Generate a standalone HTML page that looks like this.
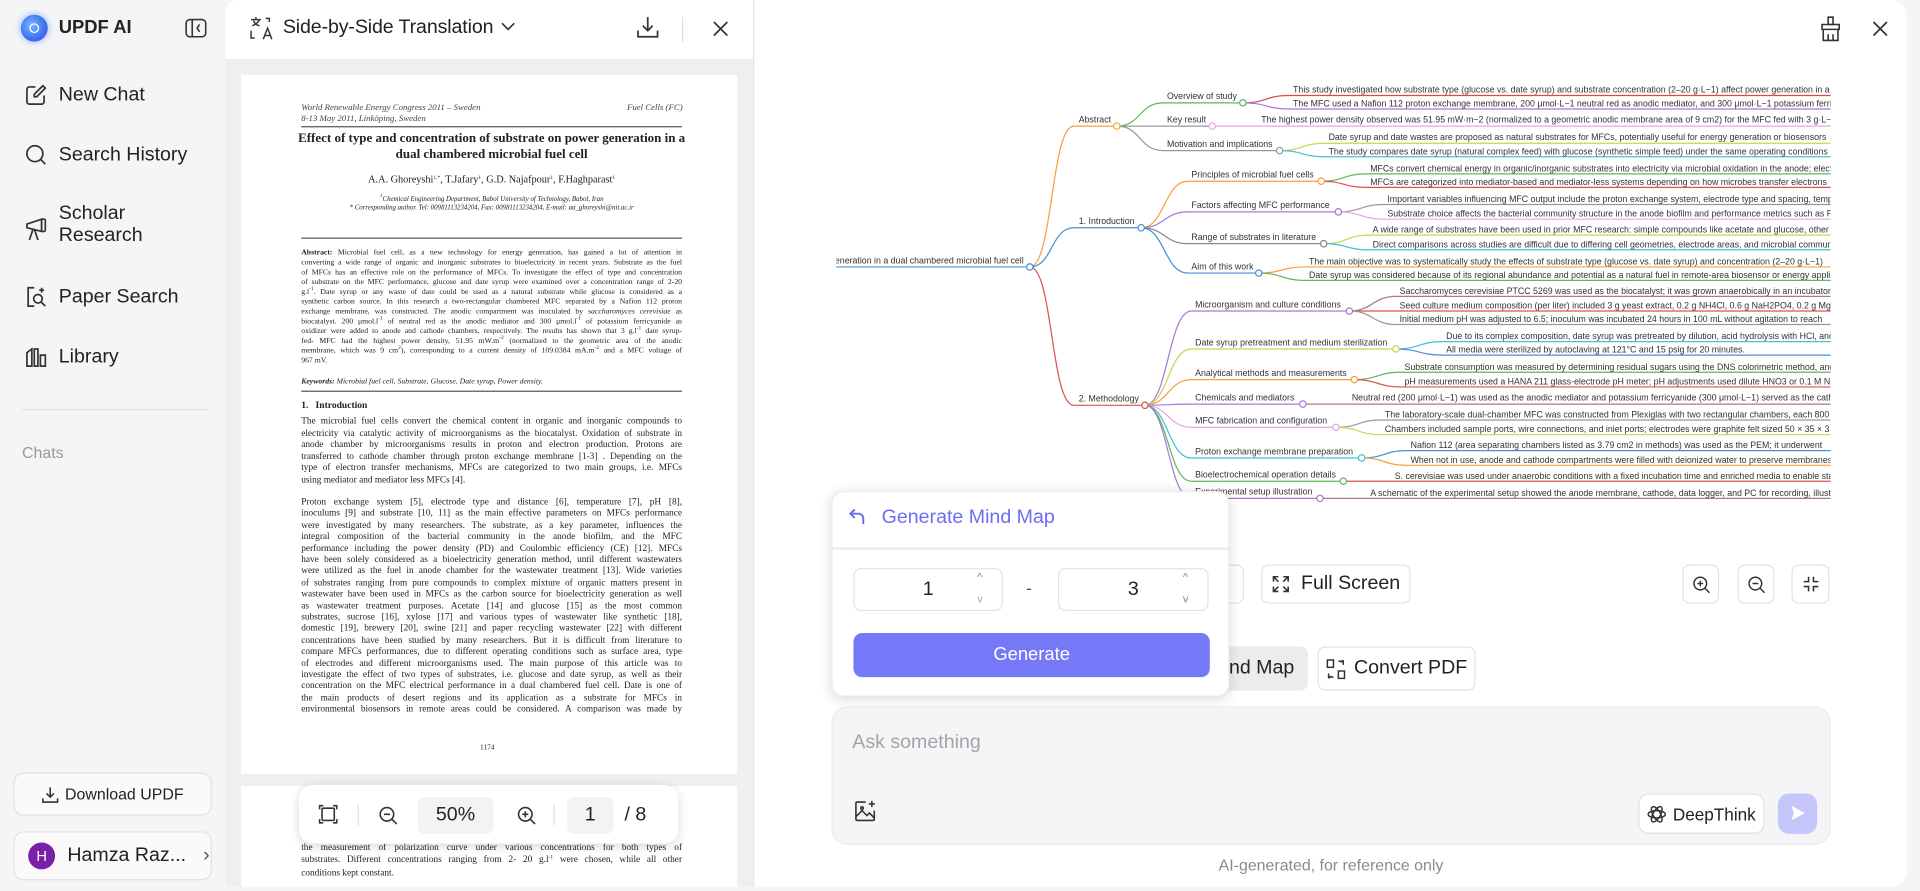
<!DOCTYPE html>
<html><head><meta charset="utf-8">
<style>
*{box-sizing:border-box;margin:0;padding:0}
html,body{width:1920px;height:891px;overflow:hidden;background:#f5f5f7;font-family:"Liberation Sans",sans-serif;color:#222}
.s{position:absolute;left:0;top:0;width:1568px;height:727.6px;transform:scale(1.22449);transform-origin:0 0}
.a{position:absolute}
.mi{position:absolute;left:20px;font-size:16px;color:#222;display:flex;align-items:center}
.mi svg{margin-right:9px}
.pdf{font-family:"Liberation Serif",serif;color:#222}
.pdf sup{font-size:4.5px;line-height:0;vertical-align:3px}
.ln{position:absolute;left:246px;width:311px;white-space:nowrap;text-align:justify;text-align-last:justify;font-size:7.6px;line-height:9px}
.ab{font-size:6.3px;line-height:8px}
.btn{position:absolute;background:#fff;border:1px solid #e2e2e6;border-radius:6px;display:flex;align-items:center;justify-content:center;font-size:16px;color:#222}
</style></head><body><div class="s">

<!-- sidebar -->
<div class="a" style="left:17px;top:12px;width:22px;height:22px;border-radius:50%;background:radial-gradient(circle at 40% 40%,#7ab8ff,#3d6ef0 60%,#6a4cf0);box-shadow:0 0 6px #8ab0ff"></div>
<div class="a" style="left:24px;top:19px;width:8px;height:8px;border:1.5px solid #fff;border-radius:50%"></div>
<div class="a" style="left:48px;top:14px;font-size:15px;font-weight:bold">UPDF AI</div>
<svg class="a" style="left:151px;top:15px" width="18" height="16" viewBox="0 0 18 16"><rect x="1" y="1" width="16" height="14" rx="3" fill="none" stroke="#333" stroke-width="1.3"/><line x1="6" y1="1" x2="6" y2="15" stroke="#333" stroke-width="1.3"/><path d="M12 5 L10 8 L12 11" fill="none" stroke="#333" stroke-width="1.3"/></svg>

<div class="mi" style="top:68px"><svg width="19" height="19" viewBox="0 0 19 19" fill="none" stroke="#333" stroke-width="1.4"><path d="M9 3H4a2 2 0 0 0-2 2v10a2 2 0 0 0 2 2h10a2 2 0 0 0 2-2v-5"/><path d="M15 2l2 2-7 7H8V9z"/></svg>New Chat</div>
<div class="mi" style="top:117px"><svg width="19" height="19" viewBox="0 0 19 19" fill="none" stroke="#333" stroke-width="1.4"><circle cx="8.5" cy="8.5" r="6.5"/><path d="M13 13l4 4"/></svg>Search History</div>
<div class="mi" style="top:166px;align-items:flex-start"><svg width="19" height="22" viewBox="0 0 19 22" fill="none" stroke="#333" stroke-width="1.4" style="margin-top:10px"><path d="M2 7l12-4v10L2 10z"/><rect x="14" y="3" width="3" height="10" rx="1"/><path d="M7 11l-3 9M8 11l3 9"/></svg><span style="line-height:18px">Scholar<br>Research</span></div>
<div class="mi" style="top:233px"><svg width="19" height="19" viewBox="0 0 19 19" fill="none" stroke="#333" stroke-width="1.4"><path d="M8 2H3v15h5"/><circle cx="11" cy="11" r="3.5"/><path d="M13.5 13.5L17 17"/><path d="M14 2v4M12 4h4"/></svg>Paper Search</div>
<div class="mi" style="top:282px"><svg width="19" height="19" viewBox="0 0 19 19" fill="none" stroke="#333" stroke-width="1.4"><path d="M2 17V6l4-3v14zM8 17V3h3v14zM13 17V8h4v9z"/></svg>Library</div>
<div class="a" style="left:18px;top:334px;width:152px;height:1px;background:#e2e2e6"></div>
<div class="a" style="left:18px;top:362px;font-size:13px;color:#999">Chats</div>
<div class="btn" style="left:11px;top:631px;width:162px;height:35px;border-radius:8px;font-size:13px;background:#fafafa"><svg width="14" height="14" viewBox="0 0 14 14" fill="none" stroke="#333" stroke-width="1.3" style="margin-right:5px"><path d="M7 1v8M4 6l3 3 3-3M1 10v3h12v-3"/></svg>Download UPDF</div>
<div class="btn" style="left:11px;top:679px;width:162px;height:40px;border-radius:8px;justify-content:flex-start;padding-left:11px;background:#fafafa"><div style="width:22px;height:22px;border-radius:50%;background:#7a1fa8;color:#fff;font-size:12px;display:flex;align-items:center;justify-content:center;margin-right:10px">H</div>Hamza Raz...<span style="margin-left:14px;color:#555">›</span></div>

<!-- translation panel -->
<div class="a" style="left:184px;top:0;width:431px;height:724px;background:#efefef;border-radius:10px 0 0 0;overflow:hidden">
 <div class="a" style="left:0;top:0;width:431px;height:48px;background:#fff"></div>
</div>
<svg class="a" style="left:204px;top:13px" width="19" height="20" viewBox="0 0 19 20" fill="none" stroke="#333" stroke-width="1.2"><path d="M1 3h8M5 1v2M2 8c3-1 5-3 6-5M3 4c1 2 3 4 5 4"/><path d="M1 12v6h3"/><path d="M11 19l3.5-9 3.5 9M12.3 16h4.4"/><path d="M13 2h3v3"/></svg>
<div class="a" style="left:231px;top:14px;font-size:16px;letter-spacing:-0.1px">Side-by-Side Translation</div>
<svg class="a" style="left:409px;top:18px" width="12" height="8"><path d="M1 1l5 5 5-5" fill="none" stroke="#333" stroke-width="1.3"/></svg>
<svg class="a" style="left:520px;top:13px" width="18" height="18" viewBox="0 0 18 18" fill="none" stroke="#333" stroke-width="1.4"><path d="M9 1v11M5 8l4 4 4-4M1 12v5h16v-5"/></svg>
<div class="a" style="left:557px;top:14px;width:1px;height:20px;background:#ddd"></div>
<svg class="a" style="left:582px;top:17px" width="13" height="13"><path d="M1 1l11 11M12 1L1 12" stroke="#333" stroke-width="1.4"/></svg>

<!-- pdf page -->
<div class="a" style="left:197px;top:61px;width:405px;height:571px;background:#fff"></div>
<div class="a" style="left:197px;top:642px;width:405px;height:82px;background:#fff"></div>
<div class="pdf">
<div class="a" style="left:246px;top:84px;font-size:7.2px;font-style:italic;color:#444">World Renewable Energy Congress 2011 – Sweden</div>
<div class="a" style="left:512px;top:84px;font-size:7.2px;font-style:italic;color:#444">Fuel Cells (FC)</div>
<div class="a" style="left:246px;top:93px;font-size:7.2px;font-style:italic;color:#444">8-13 May 2011, Linköping, Sweden</div>
<div class="a" style="left:246px;top:102.6px;width:311px;height:1px;background:#555"></div>
<div class="a" style="left:240px;top:108px;width:323px;text-align:center;font-size:10.6px;font-weight:bold;line-height:12.6px">Effect of type and concentration of substrate on power generation in a dual chambered microbial fuel cell</div>
<div class="a" style="left:246px;top:142px;width:311px;text-align:center;font-size:8.4px">A.A. Ghoreyshi<sup>1,*</sup>, T.Jafary<sup>1</sup>, G.D. Najafpour<sup>1</sup>, F.Haghparast<sup>1</sup></div>
<div class="a" style="left:246px;top:160px;width:311px;text-align:center;font-size:5.6px;font-style:italic;line-height:7.4px"><sup>1</sup>Chemical Engineering Department, Babol University of Technology, Babol, Iran<br>* Corresponding author. Tel: 00981113234204, Fax: 00981113234204, E-mail: aa_ghoreyshi@nit.ac.ir</div>
<div class="a" style="left:246px;top:193.6px;width:311px;height:1px;background:#555"></div>
<div class="ln ab" style="top:203px"><b>Abstract:</b> Microbial fuel cell, as a new technology for energy generation, has gained a lot of attention in</div>
<div class="ln ab" style="top:211px">converting a wide range of organic and inorganic substrates to bioelectricity in recent years. Substrate as the fuel</div>
<div class="ln ab" style="top:219px">of MFCs has an effective role on the performance of MFCs. To investigate the effect of type and concentration</div>
<div class="ln ab" style="top:227px">of substrate on the MFC performance, glucose and date syrup were examined over a concentration range of 2-20</div>
<div class="ln ab" style="top:235px">g.l<sup>-1</sup>. Date syrup or any waste of date could be used as a natural substrate while glucose is considered as a</div>
<div class="ln ab" style="top:243px">synthetic carbon source. In this research a two-rectangular chambered MFC separated by a Nafion 112 proton</div>
<div class="ln ab" style="top:251px">exchange membrane, was constructed. The anodic compartment was inoculated by <i>saccharomyces cerevisiae</i> as</div>
<div class="ln ab" style="top:259px">biocatalyst. 200 μmol.l<sup>-1</sup> of neutral red as the anodic mediator and 300 μmol.l<sup>-1</sup> of potassium ferricyanide as</div>
<div class="ln ab" style="top:267px">oxidizer were added to anode and cathode chambers, respectively. The results has shown that 3 g.l<sup>-1</sup> date syrup-</div>
<div class="ln ab" style="top:275px">fed- MFC had the highest power density, 51.95 mW.m<sup>-2</sup> (normalized to the geometric area of the anodic</div>
<div class="ln ab" style="top:283px">membrane, which was 9 cm<sup>2</sup>), corresponding to a current density of 109.0384 mA.m<sup>-2</sup> and a MFC voltage of</div>
<div class="a ab" style="left:246px;top:291px;font-size:6.3px">967 mV.</div>
<div class="a" style="left:246px;top:308px;font-size:6.3px;font-style:italic"><b>Keywords:</b> Microbial fuel cell, Substrate, Glucose, Date syrup, Power density.</div>
<div class="a" style="left:246px;top:318.5px;width:311px;height:1px;background:#555"></div>
<div class="a" style="left:246px;top:326px;font-size:7.8px;font-weight:bold">1.&nbsp;&nbsp; Introduction</div>
<div class="ln" style="top:339px">The microbial fuel cells convert the chemical content in organic and inorganic compounds to</div>
<div class="ln" style="top:348.5px">electricity via catalytic activity of microorganisms as the biocatalyst. Oxidation of substrate in</div>
<div class="ln" style="top:358px">anode chamber by microorganisms results in proton and electron production. Protons are</div>
<div class="ln" style="top:367.5px">transferred to cathode chamber through proton exchange membrane [1-3] . Depending on the</div>
<div class="ln" style="top:377px">type of electron transfer mechanisms, MFCs are categorized to two main groups, i.e. MFCs</div>
<div class="a" style="left:246px;top:386.5px;font-size:7.6px">using mediator and mediator less MFCs [4].</div>
<div class="ln" style="top:405px">Proton exchange system [5], electrode type and distance [6], temperature [7], pH [8],</div>
<div class="ln" style="top:414.4px">inoculums [9] and substrate [10, 11] as the main effective parameters on MFCs performance</div>
<div class="ln" style="top:423.8px">were investigated by many researchers. The substrate, as a key parameter, influences the</div>
<div class="ln" style="top:433.2px">integral composition of the bacterial community in the anode biofilm, and the MFC</div>
<div class="ln" style="top:442.6px">performance including the power density (PD) and Coulombic efficiency (CE) [12]. MFCs</div>
<div class="ln" style="top:452px">have been solely considered as a bioelectricity generation method, until different wastewaters</div>
<div class="ln" style="top:461.4px">were utilized as the fuel in anode chamber for the wastewater treatment [13]. Wide varieties</div>
<div class="ln" style="top:470.8px">of substrates ranging from pure compounds to complex mixture of organic matters present in</div>
<div class="ln" style="top:480.2px">wastewater have been used in MFCs as the carbon source for bioelectricity generation as well</div>
<div class="ln" style="top:489.6px">as wastewater treatment purposes. Acetate [14] and glucose [15] as the most common</div>
<div class="ln" style="top:499px">substrates, sucrose [16], xylose [17] and various types of wastewater like synthetic [18],</div>
<div class="ln" style="top:508.4px">domestic [19], brewery [20], swine [21] and paper recycling wastewater [22] with different</div>
<div class="ln" style="top:517.8px">concentrations have been studied by many researchers. But it is difficult from literature to</div>
<div class="ln" style="top:527.2px">compare MFCs performances, due to different operating conditions such as surface area, type</div>
<div class="ln" style="top:536.6px">of electrodes and different microorganisms used. The main purpose of this article was to</div>
<div class="ln" style="top:546px">investigate the effect of two types of substrates, i.e. glucose and date syrup, as well as their</div>
<div class="ln" style="top:555.4px">concentration on the MFC electrical performance in a dual chambered fuel cell. Date is one of</div>
<div class="ln" style="top:564.8px">the main products of desert regions and its application as a substrate for MFCs in</div>
<div class="ln" style="top:574.2px">environmental biosensors in remote areas could be considered. A comparison was made by</div>
<div class="a" style="left:392px;top:608px;font-size:6px">1174</div>
<div class="ln" style="top:687px">the measurement of polarization curve under various concentrations for both types of</div>
<div class="ln" style="top:697.4px">substrates. Different concentrations ranging from 2- 20 g.l<sup>-1</sup> were chosen, while all other</div>
<div class="a" style="left:246px;top:707.8px;font-size:7.6px">conditions kept constant.</div>
</div>

<!-- pdf toolbar -->
<div class="a" style="left:244px;top:641px;width:310px;height:48px;background:#fff;border-radius:12px;box-shadow:0 2px 8px rgba(0,0,0,.15)"></div>
<svg class="a" style="left:260px;top:657px" width="16" height="16" viewBox="0 0 16 16" fill="none" stroke="#333" stroke-width="1.3"><rect x="3" y="3" width="10" height="10" rx="1"/><path d="M1 4V1h3M12 1h3v3M15 12v3h-3M4 15H1v-3"/></svg>
<div class="a" style="left:292px;top:657px;width:1px;height:17px;background:#ddd"></div>
<svg class="a" style="left:309px;top:658px" width="16" height="16" viewBox="0 0 16 16" fill="none" stroke="#333" stroke-width="1.3"><circle cx="7" cy="7" r="5.5"/><path d="M11 11l4 4M4.5 7h5"/></svg>
<div class="a" style="left:341px;top:651px;width:62px;height:30px;background:#f3f3f5;border-radius:6px;font-size:16px;text-align:center;line-height:30px">50%</div>
<svg class="a" style="left:422px;top:658px" width="16" height="16" viewBox="0 0 16 16" fill="none" stroke="#333" stroke-width="1.3"><circle cx="7" cy="7" r="5.5"/><path d="M11 11l4 4M4.5 7h5M7 4.5v5"/></svg>
<div class="a" style="left:452px;top:657px;width:1px;height:17px;background:#ddd"></div>
<div class="a" style="left:463px;top:651px;width:38px;height:30px;background:#f3f3f5;border-radius:6px;font-size:16px;text-align:center;line-height:30px">1</div>
<div class="a" style="left:510px;top:657px;font-size:16px">/ 8</div>

<!-- right panel -->
<div class="a" style="left:615px;top:0;width:1px;height:724px;background:#e4e4e8"></div>
<div class="a" style="left:616px;top:0;width:941px;height:724px;background:#fff;border-radius:0 12px 12px 0"></div>
<svg class="a" style="left:1486px;top:13px" width="18" height="21" viewBox="0 0 18 21" fill="none" stroke="#333" stroke-width="1.3"><path d="M7 1h4v6H7z"/><path d="M2 7h14v4H2z"/><path d="M3 11v9h12v-9M7 15v5M11 15v5"/></svg>
<svg class="a" style="left:1529px;top:17px" width="13" height="13"><path d="M1 1l11 11M12 1L1 12" stroke="#333" stroke-width="1.4"/></svg>

<!-- mind map -->
<svg class="a" style="left:0;top:0" width="1568" height="430" viewBox="0 0 1568 430" font-family="Liberation Sans" font-size="7.2" fill="none">
<defs><clipPath id="c"><rect x="683" y="0" width="812" height="430"/></clipPath></defs>
<g clip-path="url(#c)" stroke-width="1">
<path d="M660 218H841" stroke="#4a8fd0"/>
<path d="M841 218C860 218,858 103,877 103H912" stroke="#f5a03c"/>
<path d="M841 218C860 218,858 186,877 186H932" stroke="#4a8fd0"/>
<path d="M841 218C860 218,858 331,877 331H935" stroke="#d9534f"/>
<path d="M912 103C932 103,930 84,950 84H1015" stroke="#5cb85c"/>
<path d="M912 103H990" stroke="#999"/>
<path d="M912 103C932 103,930 123,950 123H1045" stroke="#999"/>
<path d="M1015 84C1035 84,1033 78,1053 78H1500" stroke="#e0474c"/>
<path d="M1015 84C1035 84,1033 89,1053 89H1500" stroke="#a878d8"/>
<path d="M990 103H1500" stroke="#e6a6e6"/>
<path d="M1045 123C1064 123,1063 117,1082 117H1500" stroke="#c6d84a"/>
<path d="M1045 123C1064 123,1063 128,1082 128H1500" stroke="#41c2d6"/>
<path d="M932 186C951 186,951 148,970 148H1079" stroke="#f5a03c"/>
<path d="M932 186C951 186,951 173,970 173H1093" stroke="#a878d8"/>
<path d="M932 186C951 186,951 199,970 199H1081" stroke="#888"/>
<path d="M932 186C951 186,951 223,970 223H1028" stroke="#4a8fd0"/>
<path d="M1079 148C1098 148,1097 142,1116 142H1500" stroke="#5cb85c"/>
<path d="M1079 148C1098 148,1097 153,1116 153H1500" stroke="#d9534f"/>
<path d="M1093 173C1111 173,1112 167,1130 167H1500" stroke="#999"/>
<path d="M1093 173C1111 173,1112 179,1130 179H1500" stroke="#e6a6e6"/>
<path d="M1081 199C1100 199,1099 192,1118 192H1500" stroke="#c6d84a"/>
<path d="M1081 199C1100 199,1099 204,1118 204H1500" stroke="#41c2d6"/>
<path d="M1028 223C1047 223,1047 218,1066 218H1500" stroke="#f5a03c"/>
<path d="M1028 223C1047 223,1047 229,1066 229H1500" stroke="#5cb85c"/>
<path d="M935 331C954 331,954 254,973 254H1102" stroke="#a878d8"/>
<path d="M935 331C954 331,954 285,973 285H1140" stroke="#c6d84a"/>
<path d="M935 331C954 331,954 310,973 310H1106" stroke="#f5a03c"/>
<path d="M935 331C954 331,954 330,973 330H1064" stroke="#a878d8"/>
<path d="M935 331C954 331,954 349,973 349H1091" stroke="#e6a6e6"/>
<path d="M935 331C954 331,954 374,973 374H1112" stroke="#41c2d6"/>
<path d="M935 331C954 331,954 393,973 393H1097" stroke="#5cb85c"/>
<path d="M935 331C954 331,954 407,973 407H1078" stroke="#a878d8"/>
<path d="M1102 254C1121 254,1121 242,1140 242H1500" stroke="#b07a7a"/>
<path d="M1102 254H1500" stroke="#d9534f"/>
<path d="M1102 254C1121 254,1121 265,1140 265H1500" stroke="#999"/>
<path d="M1140 285C1159 285,1159 279,1178 279H1500" stroke="#41c2d6"/>
<path d="M1140 285C1159 285,1159 290,1178 290H1500" stroke="#4a8fd0"/>
<path d="M1106 310C1125 310,1125 304,1144 304H1500" stroke="#5cb85c"/>
<path d="M1106 310C1125 310,1125 316,1144 316H1500" stroke="#d9534f"/>
<path d="M1064 330H1500" stroke="#b07a7a"/>
<path d="M1091 349C1110 349,1109 343,1128 343H1500" stroke="#999"/>
<path d="M1091 349C1110 349,1109 355,1128 355H1500" stroke="#c6d84a"/>
<path d="M1112 374C1131 374,1130 368,1149 368H1500" stroke="#4a8fd0"/>
<path d="M1112 374C1131 374,1130 380,1149 380H1500" stroke="#f5a03c"/>
<path d="M1097 393H1500" stroke="#d9534f"/>
<path d="M1078 407H1500" stroke="#b07a7a"/>
<g fill="#fff" stroke-width="1">
<circle cx="841" cy="218" r="2.6" stroke="#4a8fd0"/><circle cx="912" cy="103" r="2.6" stroke="#f5a03c"/><circle cx="932" cy="186" r="2.6" stroke="#4a8fd0"/><circle cx="935" cy="331" r="2.6" stroke="#d9534f"/>
<circle cx="1015" cy="84" r="2.6" stroke="#5cb85c"/><circle cx="990" cy="103" r="2.6" stroke="#e6a6e6"/><circle cx="1045" cy="123" r="2.6" stroke="#999"/>
<circle cx="1079" cy="148" r="2.6" stroke="#f5a03c"/><circle cx="1093" cy="173" r="2.6" stroke="#a878d8"/><circle cx="1081" cy="199" r="2.6" stroke="#888"/><circle cx="1028" cy="223" r="2.6" stroke="#4a8fd0"/>
<circle cx="1102" cy="254" r="2.6" stroke="#a878d8"/><circle cx="1140" cy="285" r="2.6" stroke="#c6d84a"/><circle cx="1106" cy="310" r="2.6" stroke="#f5a03c"/><circle cx="1064" cy="330" r="2.6" stroke="#a878d8"/><circle cx="1091" cy="349" r="2.6" stroke="#e6a6e6"/><circle cx="1112" cy="374" r="2.6" stroke="#41c2d6"/><circle cx="1097" cy="393" r="2.6" stroke="#5cb85c"/><circle cx="1078" cy="407" r="2.6" stroke="#a878d8"/>
</g>
<g fill="#333" stroke="none">
<text x="836" y="215" text-anchor="end">Effect of type and concentration of substrate on power generation in a dual chambered microbial fuel cell</text>
<text x="881" y="100">Abstract</text><text x="881" y="183">1. Introduction</text><text x="881" y="328">2. Methodology</text>
<text x="953" y="81">Overview of study</text><text x="953" y="100">Key result</text><text x="953" y="120">Motivation and implications</text>
<text x="973" y="145">Principles of microbial fuel cells</text><text x="973" y="170">Factors affecting MFC performance</text><text x="973" y="196">Range of substrates in literature</text><text x="973" y="220">Aim of this work</text>
<text x="976" y="251">Microorganism and culture conditions</text><text x="976" y="282">Date syrup pretreatment and medium sterilization</text><text x="976" y="307">Analytical methods and measurements</text><text x="976" y="327">Chemicals and mediators</text><text x="976" y="346">MFC fabrication and configuration</text><text x="976" y="371">Proton exchange membrane preparation</text><text x="976" y="390">Bioelectrochemical operation details</text><text x="976" y="404">Experimental setup illustration</text>
<text x="1056" y="75.5">This study investigated how substrate type (glucose vs. date syrup) and substrate concentration (2–20 g·L−1) affect power generation in a dual chamber MFC</text>
<text x="1056" y="87">The MFC used a Nafion 112 proton exchange membrane, 200 μmol·L−1 neutral red as anodic mediator, and 300 μmol·L−1 potassium ferricyanide</text>
<text x="1030" y="100">The highest power density observed was 51.95 mW·m−2 (normalized to a geometric anodic membrane area of 9 cm2) for the MFC fed with 3 g·L−1</text>
<text x="1085" y="114.5">Date syrup and date wastes are proposed as natural substrates for MFCs, potentially useful for energy generation or biosensors</text>
<text x="1085" y="126">The study compares date syrup (natural complex feed) with glucose (synthetic simple feed) under the same operating conditions</text>
<text x="1119" y="140">MFCs convert chemical energy in organic/inorganic substrates into electricity via microbial oxidation in the anode; electrons</text>
<text x="1119" y="151">MFCs are categorized into mediator-based and mediator-less systems depending on how microbes transfer electrons</text>
<text x="1133" y="165">Important variables influencing MFC output include the proton exchange system, electrode type and spacing, temperature</text>
<text x="1133" y="177">Substrate choice affects the bacterial community structure in the anode biofilm and performance metrics such as PD</text>
<text x="1121" y="190">A wide range of substrates have been used in prior MFC research: simple compounds like acetate and glucose, other</text>
<text x="1121" y="202">Direct comparisons across studies are difficult due to differing cell geometries, electrode areas, and microbial communities</text>
<text x="1069" y="216">The main objective was to systematically study the effects of substrate type (glucose vs. date syrup) and concentration (2–20 g·L−1)</text>
<text x="1069" y="227">Date syrup was considered because of its regional abundance and potential as a natural fuel in remote-area biosensor or energy applications</text>
<text x="1143" y="240">Saccharomyces cerevisiae PTCC 5269 was used as the biocatalyst; it was grown anaerobically in an incubator</text>
<text x="1143" y="252">Seed culture medium composition (per liter) included 3 g yeast extract, 0.2 g NH4Cl, 0.6 g NaH2PO4, 0.2 g MgSO4</text>
<text x="1143" y="263">Initial medium pH was adjusted to 6.5; inoculum was incubated 24 hours in 100 mL without agitation to reach</text>
<text x="1181" y="277">Due to its complex composition, date syrup was pretreated by dilution, acid hydrolysis with HCl, and</text>
<text x="1181" y="288">All media were sterilized by autoclaving at 121°C and 15 psig for 20 minutes.</text>
<text x="1147" y="302">Substrate consumption was measured by determining residual sugars using the DNS colorimetric method, and</text>
<text x="1147" y="314">pH measurements used a HANA 211 glass-electrode pH meter; pH adjustments used dilute HNO3 or 0.1 M NaOH</text>
<text x="1104" y="327">Neutral red (200 μmol·L−1) was used as the anodic mediator and potassium ferricyanide (300 μmol·L−1) served as the catholyte</text>
<text x="1131" y="341">The laboratory-scale dual-chamber MFC was constructed from Plexiglas with two rectangular chambers, each 800 mL</text>
<text x="1131" y="353">Chambers included sample ports, wire connections, and inlet ports; electrodes were graphite felt sized 50 × 35 × 3 mm</text>
<text x="1152" y="366">Nafion 112 (area separating chambers listed as 3.79 cm2 in methods) was used as the PEM; it underwent</text>
<text x="1152" y="378">When not in use, anode and cathode compartments were filled with deionized water to preserve membranes</text>
<text x="1139" y="391">S. cerevisiae was used under anaerobic conditions with a fixed incubation time and enriched media to enable stable</text>
<text x="1119" y="405">A schematic of the experimental setup showed the anode membrane, cathode, data logger, and PC for recording, illustrating</text>
</g></g></svg>

<!-- mind map controls -->
<div class="btn" style="left:985px;top:461px;width:31px;height:32px"></div>
<div class="btn" style="left:1030px;top:461px;width:122px;height:32px"><svg width="14" height="14" viewBox="0 0 14 14" fill="none" stroke="#333" stroke-width="1.3" style="margin-right:10px"><path d="M1 5V1h4M1 1l4 4M13 5V1H9M13 1L9 5M1 9v4h4M1 13l4-4M13 9v4H9M13 13L9 9"/></svg>Full Screen</div>
<div class="btn" style="left:1374px;top:461px;width:30px;height:32px"><svg width="15" height="15" viewBox="0 0 16 16" fill="none" stroke="#333" stroke-width="1.3"><circle cx="7" cy="7" r="5.5"/><path d="M11 11l4 4M4.5 7h5M7 4.5v5"/></svg></div>
<div class="btn" style="left:1419px;top:461px;width:30px;height:32px"><svg width="15" height="15" viewBox="0 0 16 16" fill="none" stroke="#333" stroke-width="1.3"><circle cx="7" cy="7" r="5.5"/><path d="M11 11l4 4M4.5 7h5"/></svg></div>
<div class="btn" style="left:1463px;top:461px;width:31px;height:32px"><svg width="14" height="14" viewBox="0 0 14 14" fill="none" stroke="#333" stroke-width="1.3"><path d="M5 1v4H1M9 1v4h4M5 13V9H1M9 13V9h4"/></svg></div>
<div class="btn" style="left:960px;top:528px;width:108px;height:36px;background:#ececee;border-color:#ececee;justify-content:flex-end;padding-right:10px">Mind Map</div>
<div class="btn" style="left:1076px;top:528px;width:129px;height:36px"><svg width="16" height="17" viewBox="0 0 16 17" fill="none" stroke="#333" stroke-width="1.2" style="margin-right:7px"><rect x="1" y="1" width="5" height="6"/><rect x="10" y="10" width="5" height="6"/><path d="M10 2h4v3M12 3l2-2M6 15H2v-3M4 14l-2 2"/></svg>Convert PDF</div>

<!-- popup -->
<div class="a" style="left:679px;top:401px;width:325px;height:168px;background:#fff;border-radius:10px;box-shadow:0 2px 10px rgba(0,0,0,.15);border:1px solid #ececec"></div>
<svg class="a" style="left:693px;top:414px" width="15" height="15" viewBox="0 0 15 15" fill="none" stroke="#6b6ef0" stroke-width="1.6"><path d="M5 2L1.5 5.5 5 9"/><path d="M2 5.5h6a4 4 0 0 1 4 4V14"/></svg>
<div class="a" style="left:720px;top:414px;font-size:16px;color:#6b6ef0">Generate Mind Map</div>
<div class="a" style="left:679px;top:447px;width:325px;height:2px;background:#ececee"></div>
<div class="btn" style="left:697px;top:464px;width:122px;height:35px;font-size:16px">1</div>
<div class="a" style="left:798px;top:466px;font-size:9px;color:#888">^</div>
<div class="a" style="left:798px;top:484px;font-size:9px;color:#aaa">v</div>
<div class="a" style="left:838px;top:472px;font-size:14px;color:#555">-</div>
<div class="btn" style="left:864px;top:464px;width:123px;height:35px;font-size:16px">3</div>
<div class="a" style="left:966px;top:466px;font-size:9px;color:#888">^</div>
<div class="a" style="left:966px;top:484px;font-size:9px;color:#888">v</div>
<div class="a" style="left:697px;top:517px;width:291px;height:36px;background:#7679f7;border-radius:7px;color:#fff;font-size:15px;text-align:center;line-height:36px">Generate</div>

<!-- chat input -->
<div class="a" style="left:679px;top:577px;width:816px;height:113px;background:#f5f5f7;border:1px solid #ebebef;border-radius:13px"></div>
<div class="a" style="left:696px;top:598px;font-size:16px;color:#a3a3a8">Ask something</div>
<svg class="a" style="left:697px;top:653px" width="19" height="19" viewBox="0 0 19 19" fill="none" stroke="#333" stroke-width="1.3"><path d="M10 2H3a1 1 0 0 0-1 1v13a1 1 0 0 0 1 1h13a1 1 0 0 0 1-1V9"/><path d="M2 14l5-5 4 4 2-2 4 4"/><circle cx="7" cy="7" r="1"/><path d="M15 1v5M12.5 3.5h5"/></svg>
<div class="btn" style="left:1338px;top:648px;width:103px;height:33px;font-size:14px;border-radius:8px"><svg width="16" height="16" viewBox="0 0 16 16" fill="none" stroke="#333" stroke-width="1.2" style="margin-right:5px"><ellipse cx="8" cy="8" rx="7" ry="3"/><ellipse cx="8" cy="8" rx="7" ry="3" transform="rotate(60 8 8)"/><ellipse cx="8" cy="8" rx="7" ry="3" transform="rotate(120 8 8)"/></svg>DeepThink</div>
<div class="a" style="left:1452px;top:648px;width:32px;height:33px;background:#c3c5fb;border-radius:9px"></div>
<svg class="a" style="left:1461px;top:657px" width="14" height="14"><path d="M2 1l11 6-11 6 2-6z" fill="#fff"/></svg>
<div class="a" style="left:679px;top:699px;width:816px;text-align:center;font-size:13px;color:#8a8a90">AI-generated, for reference only</div>

</div></body></html>
